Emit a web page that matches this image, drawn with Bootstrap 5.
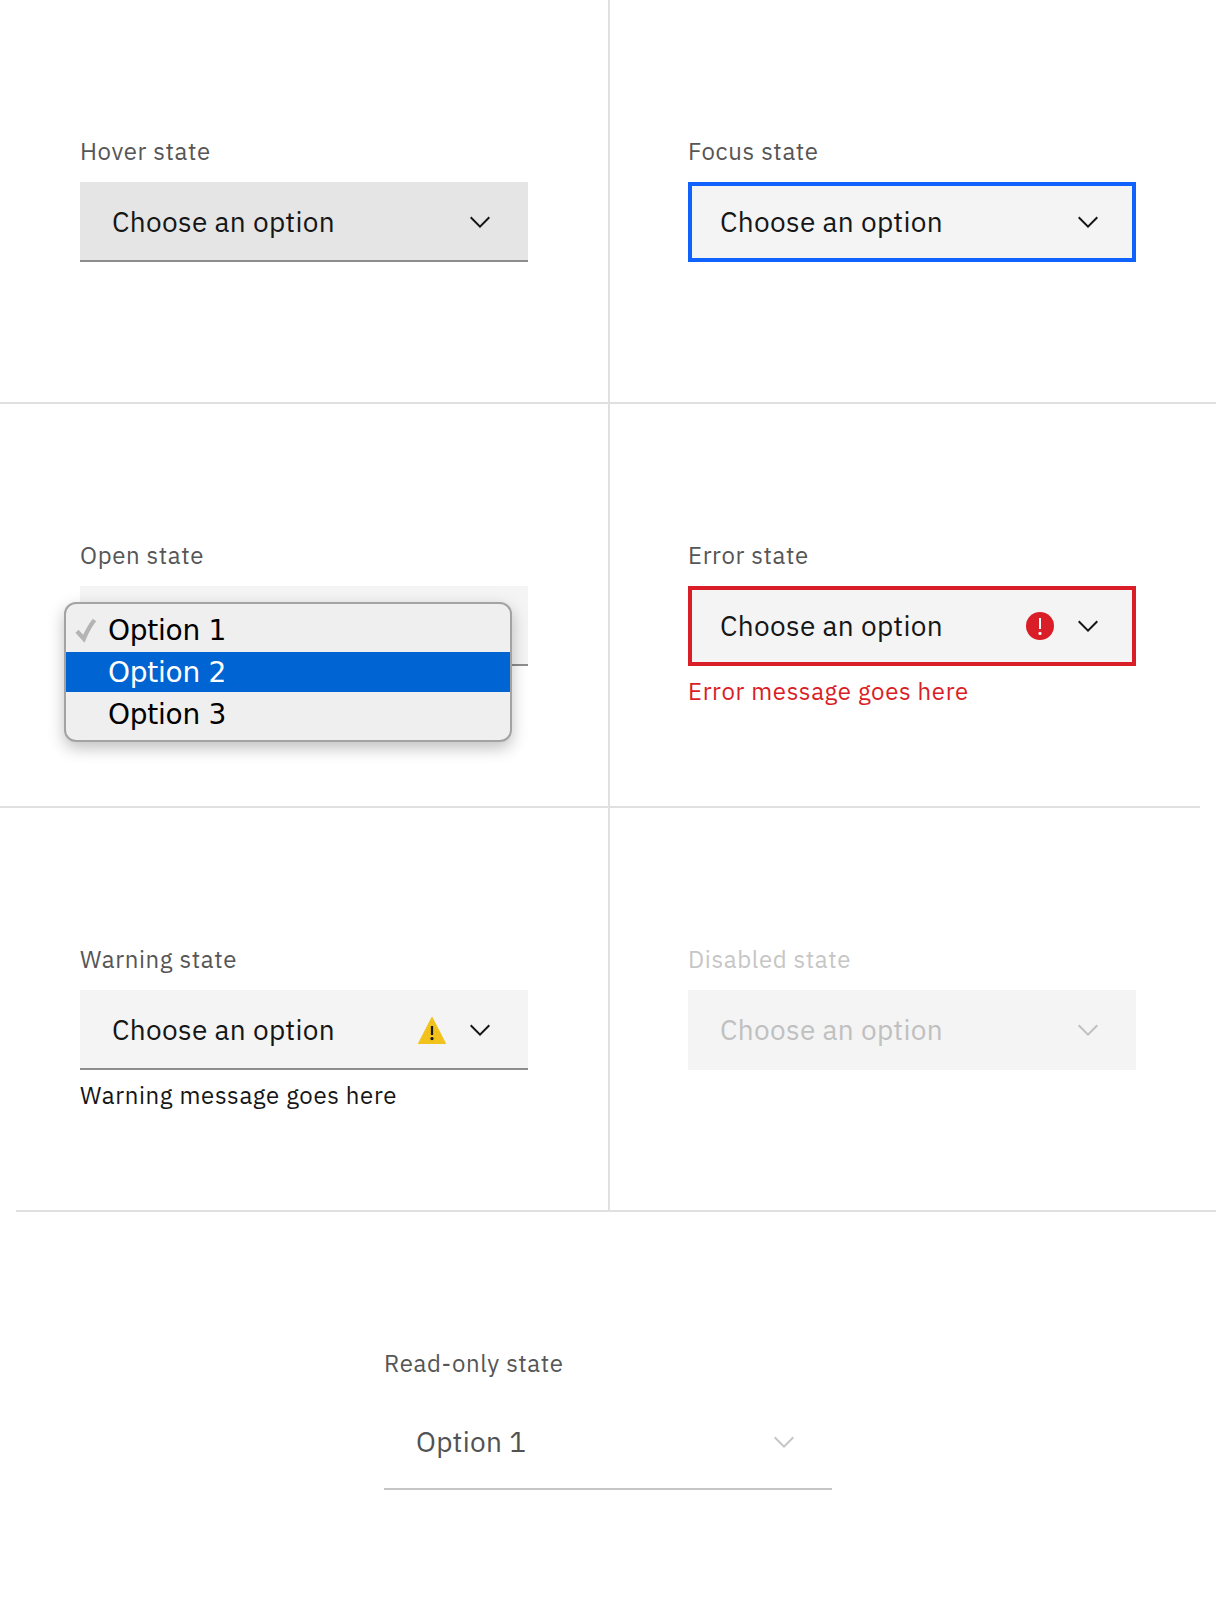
<!DOCTYPE html>
<html lang="en">
<head>
<meta charset="utf-8">
<meta name="viewport" content="width=device-width, initial-scale=1">
<title>Select states</title>
<link rel="stylesheet" href="https://cdn.jsdelivr.net/npm/bootstrap@5.3.0/dist/css/bootstrap.min.css">
<style>
body { font-family: "IBM Plex Sans", Roboto, sans-serif; color: #161616; background: #fff; }
.state-row { height: 404px; border-bottom: 2px solid #e0e0e0; }
.state-row.last-row { border-bottom: 0; }
/* two of the rules stop 16px short of the page edge */
.state-row.rule-short-end { border-bottom-color: transparent; background: linear-gradient(#e0e0e0, #e0e0e0) left bottom / 1200px 2px no-repeat border-box; }
.state-row.rule-short-start { border-bottom-color: transparent; background: linear-gradient(#e0e0e0, #e0e0e0) right bottom / 1200px 2px no-repeat border-box; }
.state-cell { padding: 135px 80px 0; }
.state-cell + .state-cell { border-left: 2px solid #e0e0e0; padding-left: 78px; }
.last-row .state-field { width: 448px; }
.field-label { font-size: 24px; line-height: 32px; height: 47px; letter-spacing: .64px; color: #565656; white-space: nowrap; }
.field-note { font-size: 24px; line-height: 32px; margin-top: 9px; letter-spacing: .64px; white-space: nowrap; }
.field-box { height: 80px; padding: 0 32px; background: #f4f4f4; border-bottom: 2px solid #8d8d8d; font-size: 28px; line-height: 36px; letter-spacing: .32px; }
.field-box svg { width: 32px; height: 32px; flex: none; }
.field-box.is-hover { background: #e5e5e5; }
.field-box.is-focus { border: 4px solid #0f62fe; padding: 0 28px; }
.field-box.is-error { border: 4px solid #da1e28; padding: 0 28px; }
.field-box.is-disabled { border: 0; color: #c0c0c0; }
.field-box.is-readonly { height: 96px; background: #fff; border-color: #c6c6c6; color: #525252; }
.field-box.is-readonly svg { color: #c6c6c6; }
.bordered-under { padding-top: 2px; }
.text-error { color: #da1e28; }
.text-off { color: #c6c6c6; }
.option-menu { left: -16px; top: 16px; width: 448px; height: 140px; padding: 6px 0 8px; background: #efefef; border: 2px solid #a3a3a3; border-radius: 12px; box-shadow: 0 6px 16px rgba(0,0,0,.25); color: #000; font: 28px/42px "DejaVu Sans", sans-serif; letter-spacing: -.25px; }
.option-item { height: 42px; padding-left: 42px; }
.option-item.is-active { height: 40px; background: #0064d2; color: #fff; }
.option-item.is-active + .option-item { padding-top: 2px; }
.option-item svg { position: absolute; left: 8px; top: 13px; }
</style>
<script src="https://cdn.jsdelivr.net/npm/bootstrap@5.3.0/dist/js/bootstrap.bundle.min.js"></script>
</head>
<body>
<svg class="d-none" aria-hidden="true">
  <symbol id="chevron" viewBox="0 0 16 16"><path fill="currentColor" d="M8 11 3 6 3.7 5.3 8 9.6 12.3 5.3 13 6z"/></symbol>
</svg>
<main>
  <div class="state-row row g-0">
    <section class="state-cell col-6"><div class="state-field">
      <div class="field-label">Hover state</div>
      <div class="field-box is-hover bordered-under d-flex align-items-center gap-3"><span class="me-auto">Choose an option</span><svg><use href="#chevron"/></svg></div>
    </div></section>
    <section class="state-cell col-6"><div class="state-field">
      <div class="field-label">Focus state</div>
      <div class="field-box is-focus d-flex align-items-center gap-3"><span class="me-auto">Choose an option</span><svg><use href="#chevron"/></svg></div>
    </div></section>
  </div>
  <div class="state-row rule-short-end row g-0">
    <section class="state-cell col-6"><div class="state-field">
      <div class="field-label">Open state</div>
      <div class="position-relative">
        <div class="field-box"></div>
        <div class="option-menu position-absolute">
          <div class="option-item"><svg width="24" height="26" viewBox="0 0 24 26"><path d="M3 14.3 9.8 21.7Q14.5 10.5 20.5 3" fill="none" stroke="#b4b4b4" stroke-width="4.4"/></svg>Option 1</div>
          <div class="option-item is-active">Option 2</div>
          <div class="option-item">Option 3</div>
        </div>
      </div>
    </div></section>
    <section class="state-cell col-6"><div class="state-field">
      <div class="field-label">Error state</div>
      <div class="field-box is-error d-flex align-items-center gap-3"><span class="me-auto">Choose an option</span>
        <svg viewBox="0 0 32 32"><circle cx="16" cy="16" r="14" fill="#da1e28"/><path d="M15 8h2v11h-2z" fill="#fff"/><circle cx="16" cy="23.4" r="1.6" fill="#fff"/></svg>
        <svg><use href="#chevron"/></svg></div>
      <div class="field-note text-error">Error message goes here</div>
    </div></section>
  </div>
  <div class="state-row rule-short-start row g-0">
    <section class="state-cell col-6"><div class="state-field">
      <div class="field-label">Warning state</div>
      <div class="field-box bordered-under d-flex align-items-center gap-3"><span class="me-auto">Choose an option</span>
        <svg viewBox="0 0 32 32"><path d="M16 3.4 29.4 29.4H2.6z" fill="#f1c21b" stroke="#f1c21b" stroke-width="1.2" stroke-linejoin="round"/><path d="M14.9 12h2.2v9h-2.2z" fill="#161616"/><circle cx="16" cy="24.6" r="1.6" fill="#161616"/></svg>
        <svg><use href="#chevron"/></svg></div>
      <div class="field-note">Warning message goes here</div>
    </div></section>
    <section class="state-cell col-6"><div class="state-field">
      <div class="field-label text-off">Disabled state</div>
      <div class="field-box is-disabled d-flex align-items-center gap-3"><span class="me-auto">Choose an option</span><svg><use href="#chevron"/></svg></div>
    </div></section>
  </div>
  <div class="state-row last-row d-flex justify-content-center">
    <section class="state-cell"><div class="state-field">
      <div class="field-label">Read-only state</div>
      <div class="field-box is-readonly bordered-under d-flex align-items-center gap-3"><span class="me-auto">Option 1</span><svg><use href="#chevron"/></svg></div>
    </div></section>
  </div>
</main>
</body>
</html>
